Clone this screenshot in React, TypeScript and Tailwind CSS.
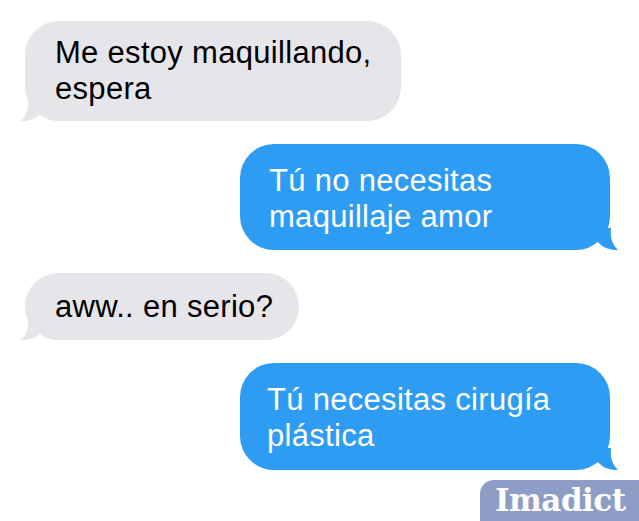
import React from "react";

const GrayTail = () => (
  <svg className="absolute left-[-4px] bottom-0" width="26" height="22" viewBox="0 0 26 22">
    <path d="M7 0 C8 9 6 16 0 22 C8 22 14 20 18 16 L26 9 L26 0 Z" fill="#e5e5ea" />
  </svg>
);

const BlueTail = () => (
  <svg className="absolute right-[-8px] bottom-0" width="26" height="22" viewBox="0 0 26 22">
    <path d="M19 0 C18 9 20 16 26 22 C18 22 12 20 8 16 L0 9 L0 0 Z" fill="#2f9cf4" />
  </svg>
);

export default function App() {
  const font = { fontFamily: '"Liberation Sans", Arial, sans-serif' };
  return (
    <div className="w-[639px] h-[521px] bg-white relative overflow-hidden" style={font}>
      <div className="flex flex-col gap-[23px] pt-[21px]">
        <div className="self-start ml-[25px] relative">
          <div className="relative z-10 w-[376px] h-[100px] rounded-[34px] bg-[#e5e5ea] flex items-center pl-[30px] text-[31px] leading-[36px] tracking-[0.3px] text-black">
            <div>Me estoy maquillando,<br />espera</div>
          </div>
          <GrayTail />
        </div>
        <div className="self-end mr-[29px] relative">
          <div className="relative z-10 w-[370px] h-[106px] rounded-[34px] bg-[#2f9cf4] flex items-center pt-[4px] pl-[29px] text-[31px] leading-[36px] tracking-[0.3px] text-white">
            <div>Tú no necesitas<br />maquillaje amor</div>
          </div>
          <BlueTail />
        </div>
        <div className="self-start ml-[25px] relative">
          <div className="relative z-10 w-[274px] h-[67px] rounded-[34px] bg-[#e5e5ea] flex items-center pl-[30px] text-[31px] leading-[36px] tracking-[0.3px] text-black">
            <div>aww.. en serio?</div>
          </div>
          <GrayTail />
        </div>
        <div className="self-end mr-[29px] relative">
          <div className="relative z-10 w-[370px] h-[107px] rounded-[34px] bg-[#2f9cf4] flex items-center pt-[2px] pl-[27px] text-[31px] leading-[36px] tracking-[0.3px] text-white">
            <div>Tú necesitas cirugía<br />plástica</div>
          </div>
          <BlueTail />
        </div>
      </div>
      <div
        className="absolute left-[480px] top-[480px] w-[159px] h-[41px] bg-[#8e9dc5] rounded-tl-[14px] flex items-center pl-[15px] text-white text-[31px] font-bold tracking-[-0.5px]"
        style={{ fontFamily: '"DejaVu Serif", serif' }}
      >
        Imadict
      </div>
    </div>
  );
}
